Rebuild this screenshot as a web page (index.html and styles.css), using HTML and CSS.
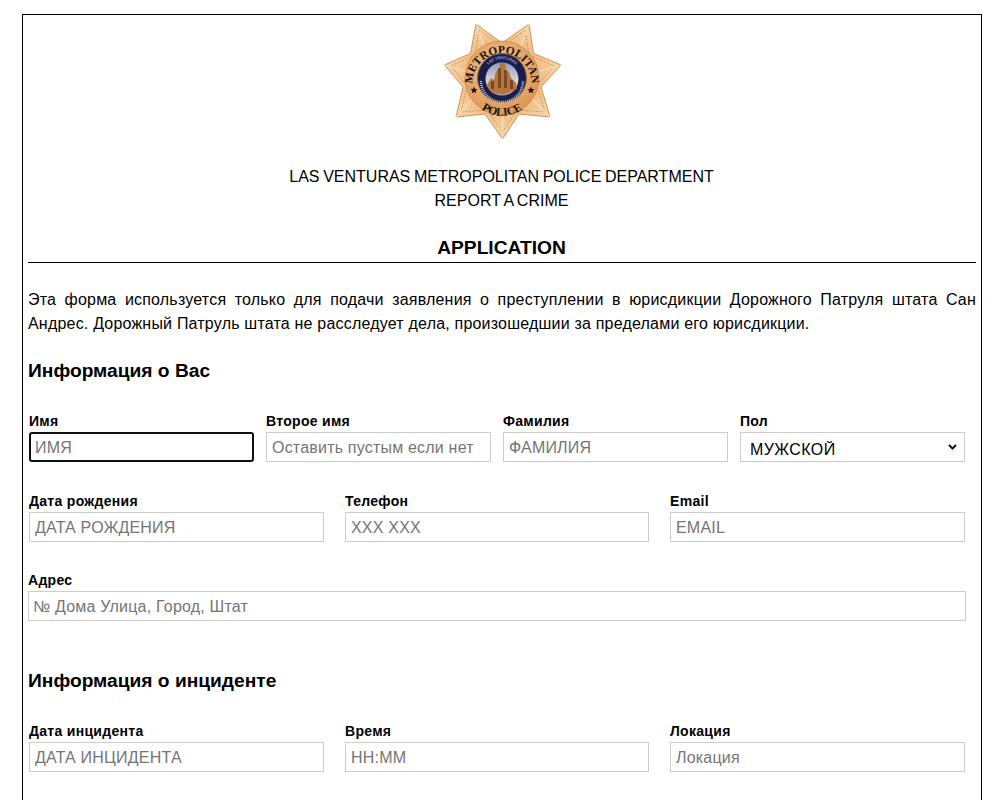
FILE: index.html
```html
<!DOCTYPE html>
<html lang="ru">
<head>
<meta charset="utf-8">
<title>Report a crime</title>
<link rel="stylesheet" href="styles.css">
</head>
<body>
<main class="sheet">
  <header class="head">
    <svg class="badge" viewBox="0 0 118 118" width="118" height="118" aria-label="Metropolitan Police badge">
      <defs>
        <radialGradient id="gold" cx="50%" cy="47%" r="58%">
          <stop offset="0" stop-color="#e09a55"/>
          <stop offset="0.45" stop-color="#eeb67c"/>
          <stop offset="0.8" stop-color="#f5d3a6"/>
          <stop offset="1" stop-color="#e9b279"/>
        </radialGradient>
        <radialGradient id="disc" cx="45%" cy="40%" r="65%">
          <stop offset="0" stop-color="#f4c894"/>
          <stop offset="1" stop-color="#dc9350"/>
        </radialGradient>
        <linearGradient id="sky" x1="0" y1="0" x2="0" y2="1">
          <stop offset="0" stop-color="#8f9fc0"/>
          <stop offset="0.55" stop-color="#d8d4d2"/>
          <stop offset="1" stop-color="#a9bcd0"/>
        </linearGradient>
        <filter id="soft" x="-5%" y="-5%" width="110%" height="110%">
          <feGaussianBlur stdDeviation="0.35"/>
        </filter>
        <path id="arcTop" d="M28.5 60 A29.5 29.5 0 0 1 87.5 60"/>
        <path id="arcBottom" d="M26 72 A35 35 0 0 0 90 72"/>
        <path id="arcInner" d="M39 55 A19 19 0 0 1 77 55"/>
      </defs>
      <g filter="url(#soft)">
        <path class="star" d="M32 1 L58 20 L85 1 L89.5 30.4 L117 42 L97 64 L106 94 L75 91 L58.5 116 L41 91 L12 94 L19 64 L0.5 42 L26.5 30.4 Z"/>
        <path class="star-line" d="M35 7 L58 24 L81 7 L85 32 L110 43 L93 63 L101 89 L73 87 L58.5 109 L43 87 L17 89 L23 63 L7 43 L31 32 Z"/>
        <path class="star-rays" d="M32 1 L45 38 M85 1 L71 38 M117 42 L90 50 M0.5 42 L26 50 M106 94 L84 72 M12 94 L32 72 M58.5 116 L58.5 90"/>
        <circle class="disc" cx="58" cy="55" r="37"/>
      </g>
      <text class="arc-big"><textPath href="#arcTop" startOffset="50%" text-anchor="middle">METROPOLITAN</textPath></text>
      <text class="arc-big"><textPath href="#arcBottom" startOffset="50%" text-anchor="middle">POLICE</textPath></text>
      <g filter="url(#soft)">
        <circle class="ring" cx="58" cy="55" r="24.5"/>
        <circle cx="58" cy="56" r="16.5" fill="url(#sky)"/>
        <path d="M43 62 L47 55 L50 57 L52 48 L55 47 L56 40 L61 40 L62 47 L65 49 L67 55 L72 60 L73 66 L60 72 L48 70 Z" fill="#b5763c"/>
        <path d="M54 45 h3 v20 h-3 Z M60 47 h3 v18 h-3 Z M47 58 h3 v8 h-3 Z M66 57 h3 v9 h-3 Z" fill="#7d4a24"/>
        <path class="ring-mark" d="M37 58 A21 21 0 0 0 79 58"/>
      </g>
      <text class="arc-tiny"><textPath href="#arcInner" startOffset="50%" text-anchor="middle">LAS VENTURAS</textPath></text>
      <path class="dot" d="M30 63.5 l1 2.4 2.6.2-2 1.7.6 2.5-2.2-1.3-2.2 1.3.6-2.5-2-1.7 2.6-.2Z M87 63.5 l1 2.4 2.6.2-2 1.7.6 2.5-2.2-1.3-2.2 1.3.6-2.5-2-1.7 2.6-.2Z"/>
    </svg>
    <p class="org">LAS VENTURAS METROPOLITAN POLICE DEPARTMENT<br>REPORT A CRIME</p>
    <h1 class="title">APPLICATION</h1>
  </header>
  <p class="intro">Эта форма используется только для подачи заявления о преступлении в юрисдикции Дорожного Патруля штата Сан Андрес. Дорожный Патруль штата не расследует дела, произошедшии за пределами его юрисдикции.</p>

  <h2 class="section section-first">Информация о Вас</h2>
  <div class="row row-four">
    <label class="field"><span class="cap">Имя</span><input class="box box-focus" placeholder="ИМЯ"></label>
    <label class="field"><span class="cap">Второе имя</span><input class="box" placeholder="Оставить пустым если нет"></label>
    <label class="field"><span class="cap">Фамилия</span><input class="box" placeholder="ФАМИЛИЯ"></label>
    <label class="field"><span class="cap">Пол</span><select class="box box-select"><option>МУЖСКОЙ</option></select></label>
  </div>
  <div class="row row-three">
    <label class="field"><span class="cap">Дата рождения</span><input class="box" placeholder="ДАТА РОЖДЕНИЯ"></label>
    <label class="field"><span class="cap">Телефон</span><input class="box" placeholder="XXX XXX"></label>
    <label class="field"><span class="cap">Email</span><input class="box" placeholder="EMAIL"></label>
  </div>
  <div class="row row-one">
    <label class="field"><span class="cap">Адрес</span><input class="box box-address" placeholder="№ Дома Улица, Город, Штат"></label>
  </div>

  <h2 class="section section-second">Информация о инциденте</h2>
  <div class="row row-three">
    <label class="field"><span class="cap">Дата инцидента</span><input class="box" placeholder="ДАТА ИНЦИДЕНТА"></label>
    <label class="field"><span class="cap">Время</span><input class="box" placeholder="HH:MM"></label>
    <label class="field"><span class="cap">Локация</span><input class="box" placeholder="Локация"></label>
  </div>
</main>
</body>
</html>
```

FILE: styles.css
```css
html, body {
  margin: 0;
  padding: 0;
  height: 800px;
  overflow: hidden;
  background: #fff;
}
body {
  font-family: "Liberation Sans", Arial, sans-serif;
  color: #000;
  padding: 14px 18px 0 22px;
  box-sizing: border-box;
}
.sheet {
  border: 1px solid #000;
  border-bottom: 0;
  padding: 8px 5px 0 5px;
  height: 790px;
  box-sizing: border-box;
}
.head {
  text-align: center;
}
.badge {
  display: block;
  margin: 0 auto;
  transform: translateX(1px);
}
.star {
  fill: url(#gold);
  stroke: #cf8a48;
  stroke-width: 0.9;
}
.star-line {
  fill: none;
  stroke: #cf9257;
  stroke-width: 1;
  stroke-dasharray: 1.6 1.4;
}
.star-rays {
  fill: none;
  stroke: #f8dfbd;
  stroke-width: 1.2;
}
.disc {
  fill: url(#disc);
  stroke: #c98a4c;
  stroke-width: 0.8;
}
.ring {
  fill: #1b1f4e;
  stroke: #8a6a3c;
  stroke-width: 1;
}
.ring-mark {
  fill: none;
  stroke: #c9cde0;
  stroke-width: 2.4;
  stroke-dasharray: 1 1;
}
.dot {
  fill: #1a1208;
}
.arc-big {
  font-family: "Liberation Serif", serif;
  font-weight: 700;
  font-size: 11.5px;
  letter-spacing: -0.1px;
  fill: #17110a;
}
.arc-tiny {
  font-family: "Liberation Sans", sans-serif;
  font-size: 4px;
  fill: #d4d8e8;
}
.org {
  margin: 24px 0 0;
  padding-right: 1px;
  font-size: 16px;
  line-height: 24px;
  word-spacing: -0.8px;
}
.title {
  margin: 24px 0 0;
  padding: 0 1px 3px 0;
  font-size: 19.2px;
  line-height: 22px;
  font-weight: 700;
  border-bottom: 1px solid #000;
}
.intro {
  margin: 25px 0 0;
  font-size: 16px;
  line-height: 24px;
  letter-spacing: 0.2px;
  text-align: justify;
}
.section {
  margin: 0;
  font-size: 19.2px;
  line-height: 22px;
  font-weight: 700;
}
.section-first { margin-top: 24px; }
.section-second { margin-top: 49px; }
.row {
  display: grid;
  margin-left: 1px;
}
.row-four {
  grid-template-columns: repeat(4, 225px);
  column-gap: 12px;
  margin-top: 31px;
}
.row-three {
  grid-template-columns: 295px 304px 295px;
  column-gap: 21px;
  margin-top: 31px;
}
.section-second + .row-three {
  margin-top: 31px;
}
.row-one {
  grid-template-columns: 1fr;
  margin-left: 0;
  margin-right: 10px;
  margin-top: 30px;
}
.field {
  display: flex;
  flex-direction: column;
}
.cap {
  font-size: 14px;
  line-height: 16px;
  font-weight: 700;
  letter-spacing: 0.3px;
  margin-bottom: 3px;
}
.box {
  box-sizing: border-box;
  width: 100%;
  height: 30px;
  margin: 0;
  padding: 2px 5px 0;
  border: 1px solid #ccc;
  border-radius: 0;
  background: #fff;
  font-family: "Liberation Sans", Arial, sans-serif;
  font-size: 16px;
  letter-spacing: 0.2px;
  color: #000;
  outline: none;
}
.box::placeholder {
  color: #757575;
  opacity: 1;
}
.box-focus {
  border: 2px solid #101010;
  border-radius: 3px;
  padding: 1px 4px 0;
}
.box-address {
  padding-left: 4px;
}
.box-select {
  padding: 4px 24px 0 9px;
  letter-spacing: 0.4px;
  appearance: none;
  background: #fff url("data:image/svg+xml,%3Csvg xmlns='http://www.w3.org/2000/svg' width='9' height='6'%3E%3Cpath d='M1 1l3.5 3.5L8 1' fill='none' stroke='%23111' stroke-width='2'/%3E%3C/svg%3E") no-repeat right 7px center;
}
```
